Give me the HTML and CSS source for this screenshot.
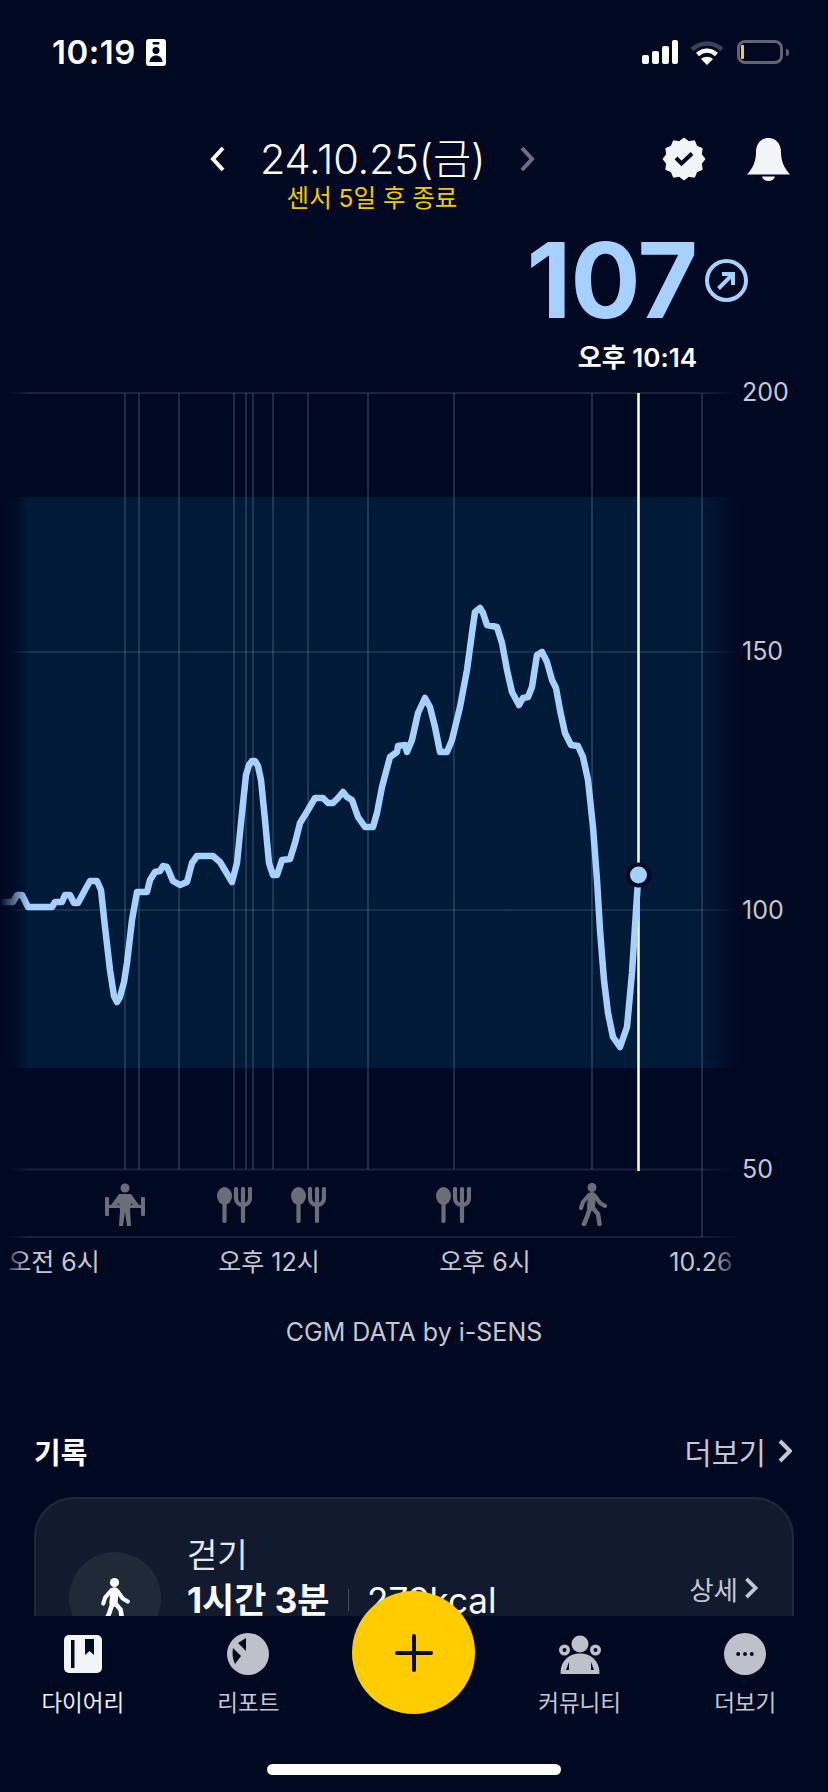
FILE: index.html
```html
<!DOCTYPE html>
<html lang="ko">
<head>
    <meta charset="UTF-8">
    <meta name="viewport" content="width=device-width, initial-scale=1.0">
    <title>다이어리</title>
    <link rel="stylesheet" href="styles.css">
</head>
<body>
    <svg class="defs" width="0" height="0">
        <symbol id="walk" viewBox="0 0 29 43">
            <circle cx="14" cy="4.500" r="4.500" fill="currentColor"/>
            <g fill="none" stroke="currentColor" stroke-linecap="round" stroke-linejoin="round">
                <path d="M14 13l-1 11" stroke-width="8"/>
                <path d="M14 24l6 7 1.500 10M12 25l-3 9-3 7" stroke-width="4.500"/>
                <path d="M11 12l-6 7-2 6M17 13l5 7 5 3" stroke-width="4"/>
            </g>
        </symbol>
        <symbol id="meal" viewBox="0 0 35 36">
            <ellipse cx="7.500" cy="9" rx="7.500" ry="9" fill="currentColor"/>
            <g fill="none" stroke="currentColor" stroke-width="4.200" stroke-linecap="round">
                <path d="M7.500 12v22M26 2v32"/>
                <path d="M19 2v9c0 4 3 7 7 7s7-3 7-7V2"/>
            </g>
        </symbol>
    </svg>

    <div class="page">
        <div class="status-bar">
            <div class="status-left">
                <span class="clock">10:19</span>
                <svg class="id-icon" viewBox="0 0 20 27">
                    <rect width="20" height="27" rx="3" fill="#fff"/>
                    <rect x="6.500" y="3" width="7" height="2.500" rx="1" fill="#010822"/>
                    <circle cx="10" cy="11.500" r="3.500" fill="#010822"/>
                    <path d="M3.500 23c0-4 3-6.500 6.500-6.500s6.500 2.500 6.500 6.500Z" fill="#010822"/>
                </svg>
            </div>
            <div class="status-right">
                <svg class="signal" viewBox="0 0 36 24">
                    <rect x="0" y="15" width="7" height="9" rx="2" fill="#fff"/>
                    <rect x="10" y="11" width="7" height="13" rx="2" fill="#fff"/>
                    <rect x="20" y="6" width="7" height="18" rx="2" fill="#fff"/>
                    <rect x="30" y="0" width="6" height="24" rx="2" fill="#fff"/>
                </svg>
                <svg class="wifi" viewBox="0 0 34 25" fill="none" stroke-width="4.500">
                    <path d="M2 9.500c9-8 21-8 30 0" stroke="#3c4154"/>
                    <path d="M7.500 14.500c6-5 13-5 19 0" stroke="#fff"/>
                    <path d="M17 25l-6-6c3.500-3 8.500-3 12 0Z" fill="#fff"/>
                </svg>
                <div class="battery"><span class="battery-level"></span></div>
                <span class="battery-cap"></span>
            </div>
        </div>

        <div class="date-head">
            <div class="date-nav">
                <svg class="nav-arrow" viewBox="0 0 16 26"><path d="M13 2L3 13l10 11"/></svg>
                <div class="date-title">24.10.25(금)</div>
                <svg class="nav-arrow is-off" viewBox="0 0 16 26"><path d="M3 2l10 11L3 24"/></svg>
            </div>
            <div class="head-actions">
                <svg class="badge" viewBox="-22 -22 44 44">
                    <path d="M0-21L4.660-17.390 10.500-18.190 12.730-12.730 18.190-10.500 17.390-4.660 21 0 17.390 4.660 18.190 10.500 12.730 12.730 10.500 18.190 4.660 17.390 0 21-4.660 17.390-10.500 18.190-12.730 12.730-18.190 10.500-17.390 4.660-21 0-17.390-4.660-18.190-10.500-12.730-12.730-10.500-18.190-4.660-17.390Z" fill="#f3f4f8" stroke="#f3f4f8" stroke-linejoin="round"/>
                    <path d="M-8-1l5.500 5.500L8-5.500" fill="none" stroke="#010822" stroke-width="4"/>
                </svg>
                <svg class="bell" viewBox="0 0 43 43" fill="#f3f4f8">
                    <path d="M21.500 0C29 0 34 6 34 14c0 9 3 16 9 22.500H0C6 30 9 23 9 14 9 6 14 0 21.500 0Z"/>
                    <path d="M15 38.500h13c-1 3-3.500 4.500-6.500 4.500S16 41.500 15 38.500Z"/>
                </svg>
            </div>
        </div>
        <div class="sensor-note">센서 5일 후 종료</div>

        <div class="reading">
            <span class="reading-value">107</span>
            <svg class="trend" viewBox="0 0 43 43" fill="none" stroke="#a5d0ff" stroke-width="4">
                <circle cx="21.500" cy="21.500" r="19.500"/>
                <path d="M13.500 29.500L28 15M17 15h11v11"/>
            </svg>
        </div>
        <div class="reading-time">오후 10:14</div>

        <svg class="chart" viewBox="0 373 828 907">
            <defs>
                <linearGradient id="band-fill" gradientUnits="userSpaceOnUse" x1="0" x2="740" y1="0" y2="0">
                    <stop offset="0" stop-color="#001a38" stop-opacity="0"/>
                    <stop offset="0.04" stop-color="#001a38"/>
                    <stop offset="0.94" stop-color="#001a38"/>
                    <stop offset="1" stop-color="#001a38" stop-opacity="0"/>
                </linearGradient>
                <linearGradient id="grid-line" gradientUnits="userSpaceOnUse" x1="0" x2="740" y1="0" y2="0">
                    <stop offset="0" stop-color="#fff" stop-opacity="0"/>
                    <stop offset="0.04" stop-color="#fff" stop-opacity="0.1"/>
                    <stop offset="0.94" stop-color="#fff" stop-opacity="0.1"/>
                    <stop offset="1" stop-color="#fff" stop-opacity="0"/>
                </linearGradient>
                <linearGradient id="fade-left" x1="0" x2="1" y1="0" y2="0">
                    <stop offset="0" stop-color="#010822"/>
                    <stop offset="1" stop-color="#010822" stop-opacity="0"/>
                </linearGradient>
                <linearGradient id="fade-right" x1="0" x2="1" y1="0" y2="0">
                    <stop offset="0" stop-color="#010822" stop-opacity="0"/>
                    <stop offset="1" stop-color="#010822"/>
                </linearGradient>
            </defs>

            <rect x="0" y="497" width="740" height="571" fill="url(#band-fill)"/>

            <g class="grid-h">
                <path d="M0 393H740M0 652H740M0 910H740M0 1169.500H740M0 1237H740"/>
            </g>
            <g class="grid-v">
                <path d="M125 393V1169M139 393V1169M179 393V1169M234 393V1169M246 393V1169M253 393V1169M273 393V1169M308 393V1169M368 393V1169M454 393V1169M592 393V1169M702 393V1237"/>
            </g>

            <line class="now-line" x1="638.500" y1="393" x2="638.500" y2="1171"/>
            <polyline class="curve" points="0,902 13,902 17,895 22,895 28,907 52,907 55,902 62,902 65,895 70,895 74,903 78,903 85,890 90,881 97,881 101,890 105,927 110,970 114,996 117,1002 120,997 124,982 127,963 132,920 137,892 147,892 150,880 155,872 160,871 163,866 167,867 173,881 180,885 187,882 192,863 197,856 213,856 220,862 232,882 237,863 242,813 246,775 249,765 252,761 255,761 258,766 261,780 265,820 269,863 273,875 277,875 282,860 290,859 295,843 300,823 308,810 315,798 323,798 328,803 333,803 338,798 343,792 347,797 352,800 358,817 365,827 373,827 377,813 382,787 390,757 397,752 398,746 405,745 407,752 412,740 418,713 425,698 430,707 435,727 440,752 447,752 452,740 460,707 467,670 472,633 475,612 480,608 483,613 487,625 497,627 502,643 507,670 512,692 519,705 523,698 528,697 532,687 537,655 542,652 547,662 552,680 556,688 560,710 565,733 571,745 578,746 583,757 588,780 593,827 597,880 600,930 604,980 608,1013 613,1037 620,1047 627,1027 632,973 638,880"/>
            <circle class="now-dot" cx="638.500" cy="875" r="10.500"/>

            <g class="y-labels">
                <text x="742" y="401">200</text>
                <text x="742" y="660">150</text>
                <text x="742" y="919">100</text>
                <text x="742" y="1178">50</text>
            </g>

            <g class="markers">
                <g transform="translate(105 1183)">
                    <circle cx="20" cy="5" r="4.500"/>
                    <path d="M14 11h12l8 11v3h-4l-4-5-1 7 1 16h-4l-2-14-2 14h-4l1-16-1-7-4 5H6v-3Z"/>
                    <rect x="0" y="14" width="4" height="19" rx="1"/>
                    <rect x="36" y="14" width="4" height="19" rx="1"/>
                    <rect x="0" y="22" width="40" height="3"/>
                </g>
                <use href="#meal" x="217" y="1187" width="35" height="36"/>
                <use href="#meal" x="291" y="1187" width="35" height="36"/>
                <use href="#meal" x="436" y="1187" width="35" height="36"/>
                <use href="#walk" x="578" y="1183" width="29" height="43"/>
            </g>

            <g class="x-labels">
                <text x="54" y="1271">오전 6시</text>
                <text x="269" y="1271">오후 12시</text>
                <text x="485" y="1271">오후 6시</text>
                <text x="701" y="1271">10.26</text>
            </g>

            <rect x="0" y="385" width="28" height="895" fill="url(#fade-left)"/>
            <rect x="712" y="1245" width="28" height="35" fill="url(#fade-right)"/>
        </svg>

        <div class="credit">CGM DATA by i-SENS</div>

        <div class="section-head">
            <h2 class="section-title">기록</h2>
            <div class="more-link">
                더보기
                <svg class="more-arrow" viewBox="0 0 14 24"><path d="M2 2l10 10L2 22"/></svg>
            </div>
        </div>

        <div class="record-card">
            <div class="record-avatar">
                <svg class="record-walk"><use href="#walk"/></svg>
            </div>
            <div class="record-text">
                <div class="record-name">걷기</div>
                <div class="record-stats">
                    <b>1시간 3분</b>
                    <span class="record-sep"></span>
                    <span>279kcal</span>
                </div>
            </div>
            <div class="record-detail">
                상세
                <svg class="detail-arrow" viewBox="0 0 14 24"><path d="M2 2l10 10L2 22"/></svg>
            </div>
        </div>

        <div class="tab-bar">
            <div class="tab is-active">
                <svg class="tab-icon" viewBox="0 0 42 42">
                    <rect x="2" y="2" width="38" height="38" rx="5" fill="#f3f4f8"/>
                    <rect x="9" y="7" width="3.500" height="28" fill="#010822"/>
                    <path d="M23 6h9v16l-4.500-4-4.500 4Z" fill="#010822"/>
                </svg>
                <span>다이어리</span>
            </div>
            <div class="tab">
                <svg class="tab-icon" viewBox="-21 -21 42 42">
                    <circle r="21" fill="#bfc1c9"/>
                    <path d="M-2-16l-8 5 8 8ZM-15-6l8 8-6 8c-2.500-5-3-11-2-16Z" fill="#010822"/>
                </svg>
                <span>리포트</span>
            </div>
            <div class="tab-gap">
                <div class="fab"><span class="fab-plus"></span></div>
            </div>
            <div class="tab">
                <svg class="tab-icon" viewBox="0 0 46 42" fill="#bfc1c9">
                    <circle cx="23" cy="11" r="8.500"/>
                    <circle cx="7.500" cy="17" r="5.500"/>
                    <circle cx="38.500" cy="17" r="5.500"/>
                    <path d="M5 41c-1 0-1.500-.5-1.500-1.500C3.500 28 12 20.500 23 20.500S42.500 28 42.500 39.500c0 1-.5 1.500-1.500 1.500Z"/>
                    <circle cx="7.500" cy="17" r="2" fill="#010822"/>
                    <circle cx="38.500" cy="17" r="2" fill="#010822"/>
                    <path d="M9 37l3-8v8ZM37 37l-3-8v8Z" fill="#010822"/>
                </svg>
                <span>커뮤니티</span>
            </div>
            <div class="tab">
                <svg class="tab-icon" viewBox="-21.500 -21.500 43 43">
                    <circle r="21.500" fill="#bfc1c9"/>
                    <g fill="#010822">
                        <circle cx="-7" r="2"/>
                        <circle r="2"/>
                        <circle cx="7" r="2"/>
                    </g>
                </svg>
                <span>더보기</span>
            </div>
        </div>
        <div class="home-bar"></div>
    </div>
</body>
</html>
```

FILE: styles.css
```css
* {
    box-sizing: border-box;
}
body {
    margin: 0;
    background-color: #010822;
    font-family: Inter, "Noto Sans CJK KR", sans-serif;
    color: #fff;
}
.defs {
    display: block;
}
.page {
    position: relative;
    width: 828px;
    height: 1792px;
    overflow: hidden;
    background-color: #010822;
}

/* status bar */
.status-bar {
    display: flex;
    justify-content: space-between;
    align-items: center;
    height: 104px;
    padding: 0 39px 0 52px;
}
.status-left {
    display: flex;
    align-items: center;
    gap: 10px;
}
.clock {
    font-size: 33px;
    font-weight: 600;
    letter-spacing: 0.5px;
}
.id-icon {
    width: 20px;
    height: 27px;
}
.status-right {
    display: flex;
    align-items: center;
}
.signal {
    width: 36px;
    height: 24px;
    margin-right: 12px;
}
.wifi {
    width: 34px;
    height: 25px;
    margin-right: 13px;
}
.battery {
    width: 46px;
    height: 24px;
    border: 3px solid #62656f;
    border-radius: 8px;
    padding: 2px 0 2px 1px;
}
.battery-level {
    display: block;
    width: 3px;
    height: 100%;
    border-radius: 1px;
    background-color: #f6d21c;
}
.battery-cap {
    width: 3px;
    height: 7px;
    margin-left: 3px;
    border-radius: 0 3px 3px 0;
    background-color: #62656f;
}

/* date header */
.date-head {
    display: flex;
    align-items: center;
    height: 50px;
    margin-top: 30px;
    padding: 0 38px 0 210px;
}
.date-nav {
    display: flex;
    align-items: center;
    gap: 34px;
}
.nav-arrow {
    width: 16px;
    height: 26px;
    fill: none;
    stroke: #fff;
    stroke-width: 4;
}
.nav-arrow.is-off {
    stroke: #6d707b;
}
.date-title {
    font-size: 41.5px;
    font-weight: 300;
    letter-spacing: -0.2px;
    line-height: 50px;
    white-space: nowrap;
}
.head-actions {
    display: flex;
    align-items: center;
    gap: 41px;
    margin-left: auto;
}
.badge {
    width: 44px;
    height: 44px;
}
.bell {
    width: 43px;
    height: 43px;
}
.sensor-note {
    width: 744px;
    font-size: 24.5px;
    line-height: 28px;
    text-align: center;
    color: #f5c800;
}

/* current value */
.reading {
    display: flex;
    justify-content: flex-end;
    align-items: center;
    gap: 8px;
    height: 110px;
    margin-top: 13px;
    padding-right: 80px;
}
.reading-value {
    font-size: 104px;
    font-weight: 700;
    letter-spacing: -1px;
    line-height: 110px;
    color: #a5d0ff;
}
.trend {
    width: 43px;
    height: 43px;
}
.reading-time {
    margin-top: 8px;
    padding-right: 131px;
    font-size: 26px;
    font-weight: 600;
    line-height: 30px;
    text-align: right;
}

/* chart */
.chart {
    display: block;
    width: 828px;
    height: 907px;
}
.grid-h path {
    fill: none;
    stroke: url(#grid-line);
    stroke-width: 2;
}
.grid-v path {
    fill: none;
    stroke: rgba(255, 255, 255, 0.18);
    stroke-width: 1.5;
}
.now-line {
    stroke: #fff;
    stroke-width: 2.5;
}
.curve {
    fill: none;
    stroke: #a5d0ff;
    stroke-width: 6.5;
    stroke-linejoin: round;
    stroke-linecap: round;
}
.now-dot {
    fill: #a5d0ff;
    stroke: #010822;
    stroke-width: 4;
}
.y-labels text {
    font-size: 25px;
    fill: #c4c7cf;
}
.x-labels text {
    font-size: 25px;
    text-anchor: middle;
    fill: #c4c7cf;
}
.markers {
    fill: #6b6e79;
    color: #6b6e79;
}
.credit {
    margin-top: 37px;
    font-size: 25px;
    line-height: 30px;
    text-align: center;
    color: #c4c7cf;
}

/* records */
.section-head {
    display: flex;
    justify-content: space-between;
    align-items: center;
    height: 40px;
    margin-top: 84px;
    padding: 0 36px 0 34px;
}
.section-title {
    margin: 0;
    font-size: 29px;
    font-weight: 700;
}
.more-link {
    display: flex;
    align-items: center;
    gap: 12px;
    font-size: 29.5px;
    color: #c4c7cf;
}
.more-arrow {
    width: 14px;
    height: 24px;
    fill: none;
    stroke: #c4c7cf;
    stroke-width: 4;
}
.record-card {
    display: flex;
    height: 202px;
    margin: 26px 34px 0;
    padding: 0 34px 0 33px;
    border: 2px solid #20293c;
    border-radius: 40px;
    background-color: #121a2f;
}
.record-avatar {
    display: flex;
    justify-content: center;
    align-items: flex-start;
    flex-shrink: 0;
    width: 92px;
    height: 92px;
    margin-top: 53px;
    padding-top: 26px;
    border-radius: 50%;
    background-color: #202938;
}
.record-walk {
    width: 30px;
    height: 44px;
    color: #fff;
}
.record-text {
    margin-left: 26px;
    padding-top: 36px;
}
.record-name {
    font-size: 33px;
    line-height: 40px;
    color: #e6e8ee;
}
.record-stats {
    display: flex;
    align-items: center;
    gap: 18px;
    margin-top: 5px;
    font-size: 35px;
    line-height: 40px;
}
.record-sep {
    width: 1.5px;
    height: 22px;
    background-color: #454c5e;
}
.record-detail {
    display: flex;
    align-items: center;
    gap: 6px;
    height: 28px;
    margin: 75px 0 0 auto;
    font-size: 26.5px;
    color: #c4c7cf;
}
.detail-arrow {
    width: 14px;
    height: 22px;
    fill: none;
    stroke: #c4c7cf;
    stroke-width: 4;
}

/* bottom tabs */
.tab-bar {
    position: absolute;
    left: 0;
    right: 0;
    bottom: 0;
    display: grid;
    grid-template-columns: repeat(5, 1fr);
    height: 176px;
    padding-top: 17px;
    background-color: #010822;
}
.tab {
    display: flex;
    flex-direction: column;
    align-items: center;
    gap: 13px;
    font-size: 22.5px;
    line-height: 30px;
    color: #c4c7cf;
}
.tab.is-active {
    color: #eceef3;
}
.tab-icon {
    width: 42px;
    height: 42px;
}
.tab:nth-child(4) .tab-icon {
    width: 46px;
}
.tab-gap {
    position: relative;
}
.fab {
    position: absolute;
    top: -42px;
    left: 50%;
    display: flex;
    justify-content: center;
    align-items: center;
    width: 123px;
    height: 123px;
    margin-left: -61.5px;
    border-radius: 50%;
    background-color: #ffcc00;
}
.fab-plus {
    position: relative;
    width: 38px;
    height: 4px;
    border-radius: 2px;
    background-color: #0b1020;
}
.fab-plus::after {
    content: "";
    position: absolute;
    top: -17px;
    left: 17px;
    width: 4px;
    height: 38px;
    border-radius: 2px;
    background-color: #0b1020;
}
.home-bar {
    position: absolute;
    left: 267px;
    top: 1764px;
    width: 294px;
    height: 11px;
    border-radius: 6px;
    background-color: #fff;
}
```
